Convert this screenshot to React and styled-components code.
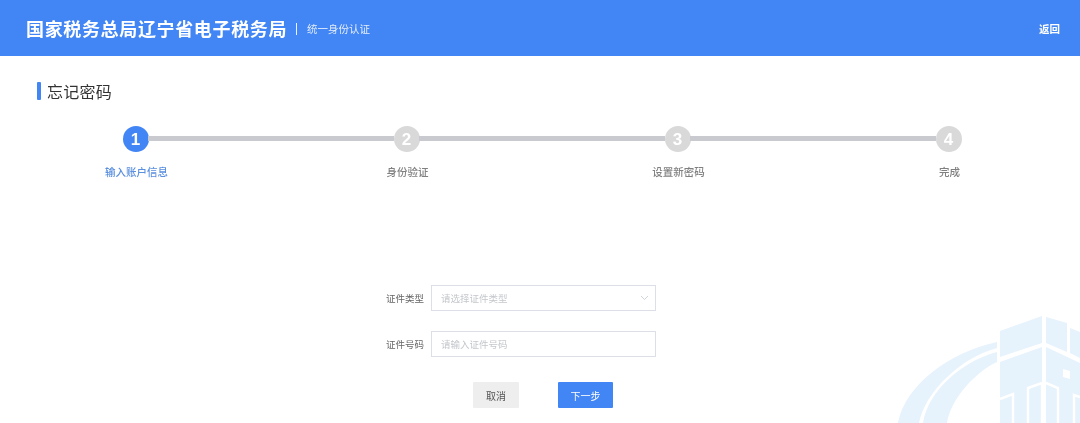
import React from "react";
import styled, { createGlobalStyle } from "styled-components";

const Global = createGlobalStyle`
  html, body { margin: 0; padding: 0; background: #fff; }
  body { font-family: "Noto Sans CJK SC", "Liberation Sans", sans-serif; overflow: hidden; }
`;
const Page = styled.div`
  position: relative; width: 1080px; height: 423px; overflow: hidden; background: #fff;
  filter: blur(0.45px);
`;
const Header = styled.header`
  height: 56px; background: #4285f4; display: flex; align-items: center;
  padding: 0 20px 0 26px; color: #fff; box-sizing: border-box;
`;
const Brand = styled.h1`
  margin: 0; font-size: 18px; font-weight: 700; letter-spacing: 0.65px; line-height: 24px; white-space: nowrap;
`;
const Divider = styled.span`
  width: 1px; height: 12px; background: rgba(255,255,255,.9); margin: 2px 10px 0 9px;
`;
const SubBrand = styled.span`
  font-size: 10.5px; line-height: 14px; opacity: .85; margin-top: 2px; white-space: nowrap;
`;
const BackLink = styled.a`
  margin-left: auto; font-size: 10.5px; font-weight: 700; color: #fff; white-space: nowrap;
`;
const TitleRow = styled.div`
  display: flex; align-items: center; margin: 26px 0 0 37px; height: 18px;
`;
const TitleBar = styled.span`
  width: 4px; height: 18px; background: #4285f4; border-radius: 1px; margin-right: 6px;
`;
const Title = styled.h2`
  margin: 0; font-size: 16px; font-weight: 400; letter-spacing: 0.25px; color: #333; line-height: 18px;
`;
const Stepper = styled.ol`
  list-style: none; display: flex; margin: 26px 0 0; padding: 0 0 0 1px;
`;
const Step = styled.li`
  position: relative; flex: 0 0 271px; display: flex; flex-direction: column; align-items: center;
  &:not(:last-child)::after {
    content: ""; position: absolute; top: 10px; left: 147px; width: 246px; height: 5px; background: #c8cad0;
  }
`;
const StepDot = styled.span`
  width: 26px; height: 26px; margin-right: 2px; border-radius: 50%; display: flex; align-items: center; justify-content: center;
  background: ${p => (p.$active ? "#4285f4" : "#d9d9d9")}; color: #fff;
  font: 700 17px/1 "Liberation Sans", sans-serif;
`;
const StepLabel = styled.span`
  margin-top: 13px; font-size: 10.5px; line-height: 14px; font-weight: 500;
  color: ${p => (p.$active ? "#5b8fdf" : "#808080")}; white-space: nowrap;
`;
const Form = styled.form`
  display: flex; flex-direction: column; gap: 20px; margin: 106px 0 0 386px; width: 270px;
`;
const Row = styled.div`
  display: flex; align-items: center; gap: 7px;
`;
const Label = styled.label`
  width: 38px; font-size: 9.5px; color: #666; white-space: nowrap;
`;
const Control = styled.div`
  flex: 1; height: 26px; box-sizing: border-box; border: 1px solid #dcdfe6; background: #fff;
  display: flex; align-items: center; justify-content: space-between; padding: 0 6px 0 9px;
  font-size: 9.5px; color: #c4c7cc;
`;
const Actions = styled.div`
  display: flex; gap: 39px; margin: 5px 0 0 87px;
`;
const Button = styled.button`
  width: ${p => (p.$primary ? "55px" : "46px")}; height: 26px; border: 0; padding: 0; border-radius: 1px;
  background: ${p => (p.$primary ? "#4285f4" : "#eeeeee")};
  color: ${p => (p.$primary ? "#fff" : "#555")}; font: 400 10px "Noto Sans CJK SC", sans-serif;
`;
const Watermark = styled.svg`
  position: absolute; right: 0; bottom: 0; width: 200px; height: 123px;
`;

const steps = ["输入账户信息", "身份验证", "设置新密码", "完成"];

export default function App() {
  return (
    <Page>
      <Global />
      <Watermark viewBox="880 300 200 123" aria-hidden="true">
        <g fill="#e6f2fc">
          <path d="M997 342C950 352 905 385 898 423L919 423C925 392 960 358 997 348Z" />
          <path d="M997 352C960 362 928 392 923 423L947 423C950 400 975 372 997 362Z" />
          <path d="M1000 331L1042 316V343L1000 357Z" />
          <path d="M1046 317L1067 323V352L1046 343Z" />
          <path d="M1070 328L1080 332V358L1070 353Z" />
          <path d="M1000 362L1042 347V423H1000Z" />
          <path d="M1046 347L1080 363V423H1046Z" />
        </g>
        <g fill="none" stroke="#fff" strokeWidth="2.5">
          <path d="M1000 399L1013 394V423" />
          <path d="M1028 423V388L1042 383V423" />
          <path d="M1046 383L1058 388V423" />
          <path d="M1074 423V395L1080 397" />
        </g>
        <path d="M1063 369L1070 371V379L1063 377Z" fill="#fff" />
      </Watermark>
      <Header>
        <Brand>国家税务总局辽宁省电子税务局</Brand>
        <Divider />
        <SubBrand>统一身份认证</SubBrand>
        <BackLink>返回</BackLink>
      </Header>
      <TitleRow>
        <TitleBar />
        <Title>忘记密码</Title>
      </TitleRow>
      <Stepper>
        {steps.map((s, i) => (
          <Step key={s}>
            <StepDot $active={i === 0}>{i + 1}</StepDot>
            <StepLabel $active={i === 0}>{s}</StepLabel>
          </Step>
        ))}
      </Stepper>
      <Form>
        <Row>
          <Label>证件类型</Label>
          <Control>
            请选择证件类型
            <svg width="9" height="6" viewBox="0 0 9 6" fill="none" stroke="#d0d3d8" strokeWidth="1">
              <path d="M1 1L4.5 4.5L8 1" />
            </svg>
          </Control>
        </Row>
        <Row>
          <Label>证件号码</Label>
          <Control>请输入证件号码</Control>
        </Row>
        <Actions>
          <Button type="button">取消</Button>
          <Button type="button" $primary>下一步</Button>
        </Actions>
      </Form>
    </Page>
  );
}
